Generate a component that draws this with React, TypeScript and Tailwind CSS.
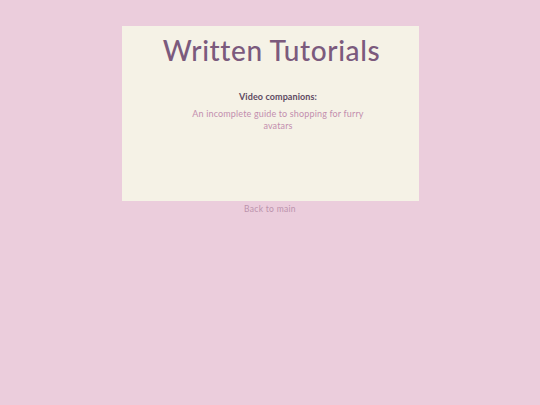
export default function App() {
  return (
    <div
      className="min-h-screen w-full bg-[#ebcddc] pt-[26px]"
      style={{ fontFamily: 'Lato, "Liberation Sans", sans-serif' }}
    >
      <div className="mx-auto flex h-[175px] w-[297px] flex-col items-center bg-[#f5f2e6]">
        <h1 className="mt-[7px] pl-[3px] text-[28px] font-medium leading-[34px] tracking-[0.6px] text-[#7b5a7d]">
          Written Tutorials
        </h1>
        <div className="mt-[24px] flex flex-col items-center pl-[16px]">
          <h2 className="text-[9px] font-bold leading-[12px] tracking-[0.1px] text-[#5e4a62]">
            Video companions:
          </h2>
          <p className="mt-[5px] w-[184px] text-center text-[9px] leading-[12px] tracking-[0.15px] text-[#c38eae]">
            An incomplete guide to shopping for furry avatars
          </p>
        </div>
      </div>
      <div className="mt-[2px] text-center text-[8.5px] leading-[12px] tracking-[0.3px]">
        <a href="#" className="text-[#bb93ac]">
          Back to main
        </a>
      </div>
    </div>
  );
}
